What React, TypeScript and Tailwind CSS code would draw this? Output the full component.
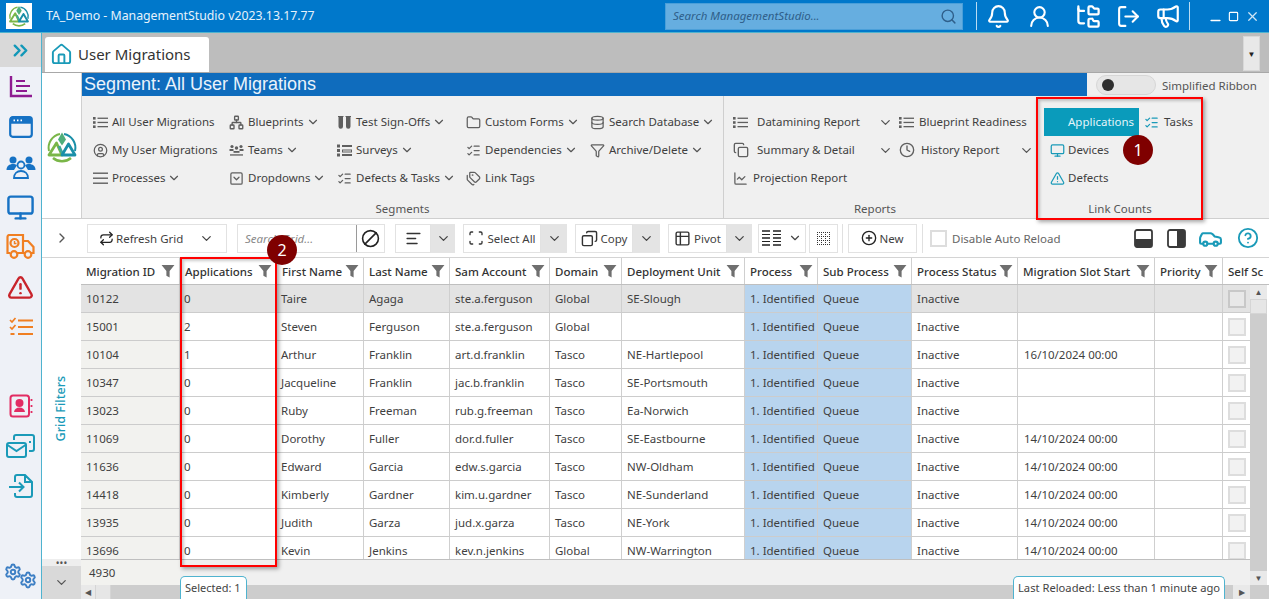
import { ReactNode } from "react";
import {
  Ban, Bell, Car, ChartLine, ChevronDown, ChevronRight, ChevronsRight, CircleHelp, CirclePlus, CircleUser, Clock,
  Copy, Database, Folder, FolderTree, Funnel, House, ListChecks, LogOut, Megaphone, Minus, Monitor,
  Network, Repeat, Scan, Search, Settings, Square, SquareChevronDown, Tags, TriangleAlert, UserRound, X,
  AlignLeft, Table2,
} from "lucide-react";

const COLS = "grid-cols-[99px_97px_87px_86px_100px_72px_123px_73px_94px_106px_137px_68px_27px]";

const headers = ["Migration ID", "Applications", "First Name", "Last Name", "Sam Account", "Domain", "Deployment Unit", "Process", "Sub Process", "Process Status", "Migration Slot Start", "Priority"];

const rows = [
  ["10122", "0", "Taire", "Agaga", "ste.a.ferguson", "Global", "SE-Slough", ""],
  ["15001", "2", "Steven", "Ferguson", "ste.a.ferguson", "Global", "", ""],
  ["10104", "1", "Arthur", "Franklin", "art.d.franklin", "Tasco", "NE-Hartlepool", "16/10/2024 00:00"],
  ["10347", "0", "Jacqueline", "Franklin", "jac.b.franklin", "Tasco", "SE-Portsmouth", ""],
  ["13023", "0", "Ruby", "Freeman", "rub.g.freeman", "Tasco", "Ea-Norwich", ""],
  ["11069", "0", "Dorothy", "Fuller", "dor.d.fuller", "Tasco", "SE-Eastbourne", "14/10/2024 00:00"],
  ["11636", "0", "Edward", "Garcia", "edw.s.garcia", "Tasco", "NW-Oldham", "14/10/2024 00:00"],
  ["14418", "0", "Kimberly", "Gardner", "kim.u.gardner", "Tasco", "NE-Sunderland", "14/10/2024 00:00"],
  ["13935", "0", "Judith", "Garza", "jud.x.garza", "Tasco", "NE-York", "14/10/2024 00:00"],
  ["13696", "0", "Kevin", "Jenkins", "kev.n.jenkins", "Global", "NW-Warrington", "14/10/2024 00:00"],
];

function Logo({ size }: { size: number }) {
  return (
    <svg width={size} height={size} viewBox="0 0 32 32" fill="none" strokeLinejoin="round">
      <path d="M14 3A14 14 0 0 0 3 20" stroke="#7ab648" strokeWidth="2" />
      <path d="M18 3a14 14 0 0 1 11 17" stroke="#1a8fa8" strokeWidth="2" />
      <path d="M7 27a14 14 0 0 0 18 0" stroke="#7ab648" strokeWidth="2.600" />
      <path d="M16 1.500l-4 7 4 6 4-6z" fill="#4fae7a" />
      <path d="M3 24 10.500 12 16 24z" stroke="#7ab648" strokeWidth="2.800" />
      <path d="M13 15l4 9" stroke="#3fa796" strokeWidth="2.800" />
      <path d="M16 24l6.500-11L29 24z" stroke="#1a8fa8" strokeWidth="2.800" />
    </svg>
  );
}

function FilterIcon() {
  return (
    <svg width="14" height="14" viewBox="0 0 13 13" className="shrink-0">
      <path d="M0.500 1h12L8 6.500V12.500L5 11V6.500z" fill="#6f6f6f" />
    </svg>
  );
}

function DotList({ color = "#5f5f5f" }: { color?: string }) {
  return (
    <svg width="15" height="13" viewBox="0 0 15 13" fill={color}>
      <rect x="0" y="1" width="2.600" height="2.600" /><rect x="0" y="5.200" width="2.600" height="2.600" /><rect x="0" y="9.400" width="2.600" height="2.600" />
      <rect x="4.500" y="1.600" width="10.500" height="1.300" /><rect x="4.500" y="5.800" width="10.500" height="1.300" /><rect x="4.500" y="10" width="10.500" height="1.300" />
    </svg>
  );
}

function Bars() {
  return (
    <svg width="15" height="13" viewBox="0 0 15 13" fill="#5f5f5f">
      <rect y="0.500" width="15" height="1.400" /><rect y="5.500" width="15" height="1.400" /><rect y="10.500" width="15" height="1.400" />
    </svg>
  );
}

function TeamIcon() {
  return (
    <svg width="15" height="13" viewBox="0 0 15 13" fill="#5f5f5f">
      <circle cx="3" cy="2.500" r="1.600" /><circle cx="12" cy="2.500" r="1.600" /><circle cx="7.500" cy="4" r="1.700" />
      <rect x="0.500" y="5" width="4" height="2" /><rect x="10.500" y="5" width="4" height="2" />
      <rect x="4.500" y="7" width="6" height="1.800" /><rect x="1" y="10.300" width="13" height="1.300" />
    </svg>
  );
}

function TubesIcon() {
  return (
    <svg width="15" height="15" viewBox="0 0 15 15" fill="#5f5f5f">
      <path d="M1 1h5.500v1H6v9.500a2.250 2.250 0 0 1-4.500 0V2H1z" /><path d="M8.500 1H14v1h-.5v9.500a2.250 2.250 0 0 1-4.500 0V2h-.5z" />
    </svg>
  );
}

function SurveyIcon() {
  return (
    <svg width="15" height="13" viewBox="0 0 15 13" fill="#5f5f5f">
      <rect y="0.500" width="3" height="3" /><rect y="5" width="3" height="3" /><rect y="9.500" width="3" height="3" />
      <rect x="5" y="1" width="10" height="2" /><path d="M5 5.500h10v3H5zM6 6.500v1h8v-1z" fillRule="evenodd" /><rect x="5" y="10" width="10" height="2" />
    </svg>
  );
}

function RibbonItem({ icon, label, arrow, className = "" }: { icon: ReactNode; label: string; arrow?: boolean; className?: string }) {
  return (
    <div className={`flex h-7 items-center whitespace-nowrap ${className}`}>
      <span className="flex w-[19px] shrink-0 items-center text-[#5f5f5f]">{icon}</span>
      <span>{label}</span>
      {arrow && <ChevronDown size={14} className="ml-[2px] text-[#555]" />}
    </div>
  );
}

function SplitButton({ icon, label, w, tail }: { icon: ReactNode; label: string; w: string; tail: string }) {
  return (
    <div className="flex h-[29px] shrink-0 items-stretch">
      <div className={`flex items-center justify-center gap-[3px] border border-[#e2e2e2] bg-white ${w}`}>
        {icon}
        {label && <span className="pt-[2px]">{label}</span>}
      </div>
      <div className={`flex items-center justify-center bg-[#e4e4e4] ${tail}`}>
        <ChevronDown size={15} className="text-[#444]" />
      </div>
    </div>
  );
}

function Sidebar() {
  return (
    <aside className="flex w-[42px] shrink-0 flex-col items-center border-r border-[#4fb3cf] bg-[#eef1f7]">
      <div className="flex h-[34px] w-full items-center justify-center bg-[#d9d9d9]">
        <ChevronsRight size={23} strokeWidth={2.500} className="text-[#1298b8]" />
      </div>
      <div className="flex h-10 w-full items-center justify-center">
        <svg width="24" height="24" viewBox="0 0 24 24" fill="none" stroke="#8e1b91" strokeWidth="2.400">
          <path d="M2 1v20h21" /><path d="M7 6h9M7 11h14M7 16h11" strokeWidth="2" />
        </svg>
      </div>
      <div className="flex h-10 w-full items-center justify-center">
        <svg width="24" height="22" viewBox="0 0 24 22" fill="none" stroke="#1672c4" strokeWidth="2.200">
          <rect x="1.200" y="1.200" width="21.600" height="19.600" rx="2.500" />
          <path d="M1 4.500h22" strokeWidth="6.500" /><path d="M4.500 4.400h1.500M8 4.400h1.500M11.500 4.400h1.500" stroke="#fff" strokeWidth="1.600" />
        </svg>
      </div>
      <div className="flex h-10 w-full items-center justify-center">
        <svg width="30" height="24" viewBox="0 0 30 24" fill="#1672c4">
          <circle cx="7" cy="5" r="3.500" /><circle cx="23" cy="5" r="3.500" />
          <path d="M0.500 15c0-4 3-6 6.500-6 1.500 0 3 .4 4 1.200L8 15z" /><path d="M29.500 15c0-4-3-6-6.500-6-1.500 0-3 .4-4 1.200L22 15z" />
          <circle cx="15" cy="10" r="3.500" fill="none" stroke="#1672c4" strokeWidth="1.800" />
          <path d="M8 23c0-4.500 3-7 7-7s7 2.500 7 7z" fill="none" stroke="#1672c4" strokeWidth="1.800" />
        </svg>
      </div>
      <div className="flex h-10 w-full items-center justify-center">
        <Monitor size={29} strokeWidth={2} className="text-[#1672c4]" />
      </div>
      <div className="flex h-10 w-full items-center justify-center">
        <svg width="29" height="26" viewBox="0 0 29 26" fill="none" stroke="#f07f22" strokeWidth="2.200">
          <path d="M4 19H1.500V3a2 2 0 0 1 2-2H17v18H11" />
          <path d="M17 7h5l5.500 6v6H25M17 19h2" />
          <circle cx="8" cy="20.500" r="3.300" /><circle cx="22" cy="20.500" r="3.300" />
          <circle cx="8.500" cy="9" r="4" /><path d="M8.500 7v2.500h2" strokeWidth="1.400" />
        </svg>
      </div>
      <div className="flex h-10 w-full items-center justify-center">
        <TriangleAlert size={27} strokeWidth={2.200} className="text-[#c8242b]" />
      </div>
      <div className="flex h-10 w-full items-center justify-center">
        <svg width="24" height="20" viewBox="0 0 24 20" fill="none" stroke="#f07f22" strokeWidth="2">
          <path d="M1 3l2 2 3.500-4M1 10l2 2 3.500-4" strokeWidth="1.700" /><path d="M9 3.500h15M9 10h15M9 17h15M1.500 17h4" />
        </svg>
      </div>
      <div className="h-[39px]" />
      <div className="flex h-10 w-full items-center justify-center">
        <svg width="24" height="24" viewBox="0 0 24 24" fill="none" stroke="#e22c63" strokeWidth="2">
          <rect x="1.500" y="1.500" width="18.500" height="21" rx="2.500" />
          <circle cx="10.500" cy="9" r="3" fill="#e22c63" /><path d="M5 18c.5-3 2.500-4.500 5.500-4.500S15.500 15 16 18z" fill="#e22c63" stroke="none" />
          <path d="M22.500 5v2M22.500 11v2M22.500 17v2" strokeWidth="1.800" />
        </svg>
      </div>
      <div className="flex h-10 w-full items-center justify-center">
        <svg width="29" height="24" viewBox="0 0 29 24" fill="none" stroke="#1a9ab8" strokeWidth="2">
          <path d="M8 6V3a2 2 0 0 1 2-2h16a2 2 0 0 1 2 2v12a2 2 0 0 1-2 2h-3M23 8h2" />
          <rect x="1" y="9" width="19" height="14" rx="2" /><path d="M1.500 11l9 6 9-6" />
        </svg>
      </div>
      <div className="flex h-10 w-full items-center justify-center">
        <svg width="24" height="24" viewBox="0 0 24 24" fill="none" stroke="#1a9ab8" strokeWidth="2">
          <path d="M6 8V3a2 2 0 0 1 2-2h8l7 7v13a2 2 0 0 1-2 2H8a2 2 0 0 1-2-2v-2M16 1v7h7M0 13h14M10 8.500l4.500 4.500-4.500 4.500" />
        </svg>
      </div>
      <div className="mt-auto flex h-[36px] w-full items-start justify-center">
        <Settings size={18} strokeWidth={2.600} className="text-[#3d7fc4]" />
        <Settings size={18} strokeWidth={2.600} className="-ml-[3px] mt-[8px] text-[#3d7fc4]" />
      </div>
    </aside>
  );
}

function TitleBar() {
  return (
    <header className="flex h-[33px] shrink-0 items-center border-b border-[#4fb3cf] bg-[#0078cb] text-white">
      <div className="ml-[6px] flex h-[26px] w-[26px] items-center justify-center bg-white">
        <Logo size={22} />
      </div>
      <span className="ml-[14px] w-[619px] whitespace-nowrap text-[12.300px] text-[#e6f2fb]">TA_Demo - ManagementStudio v2023.13.17.77</span>
      <div className="flex h-[27px] w-[298px] items-center justify-between border border-[#4a9fd9] bg-[#66aee0] pl-[7px] pr-[5px]">
        <span className="text-[11.500px] italic text-[#2f5f8a]">Search ManagementStudio...</span>
        <Search size={17} className="text-[#2f5f8a]" />
      </div>
      <div className="ml-[13px] h-[28px] w-px bg-[#b9dcf3]" />
      <Bell size={25} className="ml-[9px]" />
      <UserRound size={25} className="ml-[16px]" />
      <FolderTree size={27} className="ml-[23px]" />
      <LogOut size={25} className="ml-[14px] -scale-x-100 rotate-180" />
      <Megaphone size={26} className="ml-[14px]" />
      <div className="ml-[8px] h-[28px] w-px bg-[#b9dcf3]" />
      <Minus size={15} strokeWidth={2.500} className="ml-[18px] mt-[8px]" />
      <Square size={11} strokeWidth={2.500} className="ml-[5px]" />
      <X size={15} className="ml-[6px] text-[#cfe6f6]" />
    </header>
  );
}

function Ribbon() {
  return (
    <div className="flex h-[146px] shrink-0 border-b border-[#cfcfcf] bg-white">
      <div className="flex w-[39px] shrink-0 items-center justify-center pt-[3px]">
        <Logo size={32} />
      </div>
      <div className="flex min-w-0 flex-1 flex-col border-l border-[#d0d0d0]">
        <div className="flex h-[23px] shrink-0 bg-[#0f6cbd]">
          <span className="flex-1 pl-[2px] font-['Liberation_Sans',sans-serif] text-[18px] leading-[23px] text-[#eaf3fb]">Segment: All User Migrations</span>
          <div className="flex w-[182px] items-center bg-[#f0f0f0] pl-[9px]">
            <div className="flex h-[20px] w-[60px] items-center rounded-full border border-[#d6d6d6] bg-[#e6e6e6] pl-[5px]">
              <div className="h-3 w-3 rounded-full bg-[#2f2f2f]" />
            </div>
            <span className="ml-[6px] whitespace-nowrap pt-[2px] text-[#555]">Simplified Ribbon</span>
          </div>
        </div>
        <div className="flex min-h-0 flex-1 bg-[#f0f0f0]">
          <div className="flex w-[642px] shrink-0 flex-col border-r border-[#cfcfcf] pl-[11px] pt-[12px]">
            <div className="flex h-[84px]">
              <div className="w-[136px]">
                <RibbonItem icon={<DotList />} label="All User Migrations" />
                <RibbonItem icon={<CircleUser size={15} />} label="My User Migrations" />
                <RibbonItem icon={<Bars />} label="Processes" arrow />
              </div>
              <div className="w-[108px]">
                <RibbonItem icon={<Network size={15} strokeWidth={2.200} />} label="Blueprints" arrow />
                <RibbonItem icon={<TeamIcon />} label="Teams" arrow />
                <RibbonItem icon={<SquareChevronDown size={15} />} label="Dropdowns" arrow />
              </div>
              <div className="w-[129px]">
                <RibbonItem icon={<TubesIcon />} label="Test Sign-Offs" arrow />
                <RibbonItem icon={<SurveyIcon />} label="Surveys" arrow />
                <RibbonItem icon={<ListChecks size={15} />} label="Defects & Tasks" arrow />
              </div>
              <div className="w-[124px]">
                <RibbonItem icon={<Folder size={15} />} label="Custom Forms" arrow />
                <RibbonItem icon={<ListChecks size={15} />} label="Dependencies" arrow />
                <RibbonItem icon={<Tags size={15} />} label="Link Tags" />
              </div>
              <div>
                <RibbonItem icon={<Database size={15} />} label="Search Database" arrow />
                <RibbonItem icon={<Funnel size={15} />} label="Archive/Delete" arrow />
              </div>
            </div>
            <div className="mt-[8px] pr-[11px] text-center text-[#555]">Segments</div>
          </div>
          <div className="flex w-[313px] shrink-0 flex-col pl-[9px] pt-[12px]">
            <div className="flex h-[84px]">
              <div className="w-[166px]">
                <div className="flex h-7 items-center">
                  <DotList />
                  <span className="ml-[9px] w-[121px] whitespace-nowrap">Datamining Report</span>
                  <ChevronDown size={15} className="text-[#555]" />
                </div>
                <div className="flex h-7 items-center">
                  <Copy size={16} className="text-[#5f5f5f]" />
                  <span className="ml-[8px] w-[121px] whitespace-nowrap">Summary & Detail</span>
                  <ChevronDown size={15} className="text-[#555]" />
                </div>
                <div className="flex h-7 items-center">
                  <ChartLine size={15} className="text-[#5f5f5f]" />
                  <span className="ml-[5px] whitespace-nowrap">Projection Report</span>
                </div>
              </div>
              <div>
                <div className="flex h-7 items-center">
                  <DotList />
                  <span className="ml-[5px] whitespace-nowrap">Blueprint Readiness</span>
                </div>
                <div className="flex h-7 items-center">
                  <Clock size={16} className="text-[#5f5f5f]" />
                  <span className="ml-[6px] w-[98px] whitespace-nowrap">History Report</span>
                  <ChevronDown size={15} className="text-[#555]" />
                </div>
              </div>
            </div>
            <div className="mt-[8px] pr-[20px] text-center text-[#555]">Reports</div>
          </div>
          <div className="flex flex-1 flex-col pl-[7px] pt-[12px]">
            <div className="flex h-[84px]">
              <div className="w-[95px]">
                <div className="flex h-[28px] items-center bg-[#0a9bbb] pl-[24px] text-[#e4f5fa]">Applications</div>
                <div className="flex h-7 items-center pl-[6px]">
                  <Monitor size={15} className="text-[#1a9ab8]" />
                  <span className="ml-[3px]">Devices</span>
                </div>
                <div className="flex h-7 items-center pl-[6px]">
                  <TriangleAlert size={15} className="text-[#1a9ab8]" />
                  <span className="ml-[3px]">Defects</span>
                </div>
              </div>
              <div className="flex h-7 items-center pl-[5px]">
                <ListChecks size={15} className="text-[#1a9ab8]" />
                <span className="ml-[5px]">Tasks</span>
              </div>
            </div>
            <div className="mt-[8px] w-[152px] text-center text-[#555]">Link Counts</div>
          </div>
        </div>
      </div>
    </div>
  );
}

function Toolbar() {
  return (
    <div className="flex h-[39px] shrink-0 items-center border-b border-[#d4d4d4] bg-white">
      <div className="flex w-[39px] shrink-0 items-center justify-center">
        <ChevronRight size={16} className="text-[#555]" />
      </div>
      <div className="ml-[6px] flex h-[29px] w-[140px] shrink-0 items-center justify-between border border-[#e2e2e2] pl-[11px] pr-[12px]">
        <span className="flex items-center gap-[2px]"><Repeat size={15} className="text-[#222]" /><span className="pt-[2px]">Refresh Grid</span></span>
        <ChevronDown size={15} className="text-[#444]" />
      </div>
      <div className="ml-[10px] flex h-[29px] w-[148px] shrink-0 items-center border border-[#e2e2e2]">
        <span className="flex-1 pl-[7px] pt-[2px] italic text-[#8a8a8a]">Search Grid...</span>
        <div className="flex h-full w-[28px] items-center justify-center border-l border-[#9a9a9a]">
          <Ban size={19} className="-scale-x-100 text-[#222]" />
        </div>
      </div>
      <div className="ml-[10px]"><SplitButton icon={<AlignLeft size={17} className="text-[#333]" />} label="" w="w-[36px]" tail="w-[24px]" /></div>
      <div className="ml-[8px]"><SplitButton icon={<Scan size={16} className="text-[#333]" />} label="Select All" w="w-[78px]" tail="w-[26px]" /></div>
      <div className="ml-[8px]"><SplitButton icon={<Copy size={17} className="-scale-x-100 text-[#333]" />} label="Copy" w="w-[58px]" tail="w-[27px]" /></div>
      <div className="ml-[8px]"><SplitButton icon={<Table2 size={17} className="text-[#333]" />} label="Pivot" w="w-[59px]" tail="w-[25px]" /></div>
      <div className="ml-[6px] flex h-[29px] w-[48px] shrink-0 items-center justify-center gap-[7px] border border-[#e2e2e2]">
        <svg width="19" height="16" viewBox="0 0 19 16" fill="none" stroke="#222" strokeWidth="1.600">
          <path d="M0 1h8M11 1h8M0 8h8M11 8h8M0 15h8M11 15h8" /><path d="M0 4.500h19M0 11.500h19" strokeWidth="1" strokeDasharray="8 3" />
        </svg>
        <ChevronDown size={14} className="text-[#444]" />
      </div>
      <div className="ml-[3px] flex h-[29px] w-[29px] shrink-0 items-center justify-center border border-[#e2e2e2]">
        <svg width="15" height="15" viewBox="0 0 15 15" fill="none" stroke="#333" strokeWidth="1" strokeDasharray="1 1">
          <path d="M1 1.500h13M1 5.500h13M1 9.500h13M1 13.500h13M1.500 1v13M5.500 1v13M9.500 1v13M13.500 1v13" />
        </svg>
      </div>
      <div className="ml-[4px] h-[29px] w-px shrink-0 bg-[#e0e0e0]" />
      <div className="ml-[5px] flex h-[29px] w-[69px] shrink-0 items-center justify-center gap-[2px] border border-[#e2e2e2]">
        <CirclePlus size={16} className="text-[#222]" /><span className="pt-[2px]">New</span>
      </div>
      <div className="ml-[5px] h-[29px] w-px shrink-0 bg-[#e0e0e0]" />
      <div className="ml-[7px] h-[17px] w-[17px] shrink-0 border-2 border-[#dddddd]" />
      <span className="ml-[5px] w-[182px] shrink-0 whitespace-nowrap pt-[2px] text-[#666]">Disable Auto Reload</span>
      <svg width="19" height="19" viewBox="0 0 19 19" className="shrink-0">
        <rect x="1" y="1" width="17" height="17" rx="2" fill="#fff" stroke="#3a3a3a" strokeWidth="1.800" />
        <rect x="1" y="10" width="17" height="8" fill="#3a3a3a" />
      </svg>
      <svg width="19" height="19" viewBox="0 0 19 19" className="ml-[14px] shrink-0">
        <rect x="1" y="1" width="17" height="17" rx="2" fill="#fff" stroke="#3a3a3a" strokeWidth="1.800" />
        <rect x="10" y="1" width="8" height="17" fill="#3a3a3a" />
      </svg>
      <Car size={25} className="ml-[12px] shrink-0 text-[#1a9ab8]" />
      <CircleHelp size={22} className="ml-[14px] shrink-0 text-[#1a9ab8]" />
    </div>
  );
}

function DataGrid() {
  return (
    <div className="flex min-w-0 flex-1 flex-col">
      <div className="flex h-[27px] shrink-0 border-b border-[#bfbfbf] bg-white font-medium text-[#333]">
        <div className={`grid ${COLS}`}>
          {headers.map((h) => (
            <div key={h} className="flex items-center justify-between overflow-hidden whitespace-nowrap border-r border-[#cfcfcf] pl-[5px] pr-[4px]">
              <span className="pt-[2px]">{h}</span>
              <FilterIcon />
            </div>
          ))}
          <div className="flex w-[46px] items-center overflow-hidden whitespace-nowrap pl-[5px] pt-[2px]">Self Sc</div>
        </div>
      </div>
      <div className="flex min-h-0 flex-1">
        <div className="flex w-[1169px] shrink-0 flex-col">
          <div className="h-[275px] shrink-0 overflow-hidden border-b border-[#bfbfbf]">
            {rows.map((r, i) => (
              <div key={r[0]} className={`grid h-[28px] border-b border-[#cccccc] ${COLS} ${i === 0 ? "bg-[#e3e3e3]" : "bg-white"}`}>
                <div className={`flex items-center border-r border-[#cfcfcf] pl-[5px] ${i === 0 ? "" : "bg-[#f2f2ef]"}`}>{r[0]}</div>
                {r.slice(1, 7).map((c, j) => (
                  <div key={j} className={`flex items-center whitespace-nowrap border-r border-[#cfcfcf] ${j < 2 ? "pl-[4px]" : "pl-[5px]"}`}>{c}</div>
                ))}
                <div className="flex items-center whitespace-nowrap border-r border-[#cfcfcf] bg-[#b8d4ee] pl-[5px]">1. Identified</div>
                <div className="flex items-center border-r border-[#cfcfcf] bg-[#b8d4ee] pl-[5px]">Queue</div>
                <div className="flex items-center border-r border-[#cfcfcf] pl-[5px]">Inactive</div>
                <div className="flex items-center whitespace-nowrap border-r border-[#cfcfcf] pl-[6px]">{r[7]}</div>
                <div className="border-r border-[#cfcfcf]" />
                <div className="flex items-center pl-[5px]">
                  <div className={`h-[18px] w-[18px] border-2 ${i === 0 ? "border-[#c8c8c8] bg-[#e8e8e8]" : "border-[#dddddd] bg-[#f2f2f2]"}`} />
                </div>
              </div>
            ))}
          </div>
          <div className="flex h-[26px] shrink-0 items-center bg-[#f0f0f0]">
            <div className="flex h-full w-[99px] items-center bg-[#f2f2ef] pl-[8px]">4930</div>
          </div>
        </div>
        <div className="flex w-[17px] shrink-0 flex-col items-center bg-[#cdcdcd]">
          <div className="flex h-[14px] w-full items-center justify-center bg-[#e9e9e9] text-[8px] leading-none text-[#555]">▲</div>
          <div className="h-[15px] w-full border border-[#d5d5d5] bg-[#e6e6e6]" />
          <div className="mt-auto flex h-[14px] w-full items-center justify-center bg-[#e9e9e9] text-[8px] leading-none text-[#555]">▼</div>
        </div>
      </div>
      <div className="flex h-[14px] shrink-0 items-center bg-[#cdcdcd] text-[8px] leading-none text-[#555]">
        <div className="flex h-full w-[14px] items-center justify-center bg-[#e9e9e9]">◀</div>
        <div className="h-full w-[16px] border-x border-[#d5d5d5] bg-[#e6e6e6]" />
        <div className="ml-auto mr-[19px] flex h-full w-[17px] items-center justify-center bg-[#e9e9e9]">▶</div>
      </div>
    </div>
  );
}

export default function App() {
  return (
    <div className="relative flex h-[599px] w-[1269px] flex-col overflow-hidden bg-white font-['Noto_Sans',sans-serif] text-[11.500px] text-[#3f3f3f]">
      <TitleBar />
      <div className="flex min-h-0 flex-1">
        <Sidebar />
        <main className="flex min-w-0 flex-1 flex-col">
          <div className="flex h-[40px] shrink-0 items-end border-b border-[#a8a8a8] bg-[#bdbdbd] pl-[3px]">
            <div className="flex h-[35px] w-[164px] items-center gap-[5px] rounded-t-[3px] bg-white pl-[5px] text-[15px] text-[#333]">
              <House size={23} className="text-[#1a9ab8]" />User Migrations
            </div>
            <div className="mb-[1px] ml-auto mr-[9px] flex h-[35px] w-[17px] items-center justify-center border border-[#d8d8d8] bg-[#e8e8e8] text-[8px] text-[#222]">▼</div>
          </div>
          <Ribbon />
          <Toolbar />
          <div className="flex min-h-0 flex-1">
            <div className="flex w-[39px] shrink-0 flex-col items-center">
              <div className="flex min-h-0 flex-1 items-center justify-center">
                <span className="rotate-180 text-[12.500px] font-medium text-[#1a9ab8] [writing-mode:vertical-rl]">Grid Filters</span>
              </div>
              <div className="flex h-[7px] w-full items-center justify-center bg-[#eeeeee] text-[10px] leading-none text-[#555]">•••</div>
              <div className="flex h-[33px] w-full items-center justify-center bg-[#d9d9d9]">
                <ChevronDown size={15} className="text-[#555]" />
              </div>
            </div>
            <DataGrid />
          </div>
        </main>
      </div>

      {/* annotations sit on top of the app */}
      <div className="absolute left-[1036px] top-[97px] h-[123px] w-[167px] border-2 border-[#ff0000] shadow-[2px_2px_4px_rgba(0,0,0,0.35),inset_2px_2px_3px_rgba(0,0,0,0.2)]" />
      <div className="absolute left-[180px] top-[257px] h-[310px] w-[97px] border-2 border-[#ff0000] shadow-[2px_2px_4px_rgba(0,0,0,0.35),inset_2px_2px_3px_rgba(0,0,0,0.2)]" />
      <div className="absolute left-[1123px] top-[135px] flex h-[30px] w-[30px] items-center justify-center rounded-full bg-[#7f0000] text-[16px] text-white">1</div>
      <div className="absolute left-[267px] top-[235px] flex h-[30px] w-[30px] items-center justify-center rounded-full bg-[#7f0000] text-[16px] text-white">2</div>
      <div className="absolute left-[180px] top-[576px] h-[23px] w-[67px] whitespace-nowrap rounded-t-[5px] border border-b-0 border-[#4fb3cf] bg-white pl-[4px] pt-[3px] text-[11px] text-[#444]">Selected: 1</div>
      <div className="absolute left-[1013px] top-[576px] h-[23px] w-[212px] whitespace-nowrap rounded-t-[5px] border border-b-0 border-[#4fb3cf] bg-white pl-[4px] pt-[3px] text-[11.200px] text-[#444]">Last Reloaded: Less than 1 minute ago</div>
    </div>
  );
}
